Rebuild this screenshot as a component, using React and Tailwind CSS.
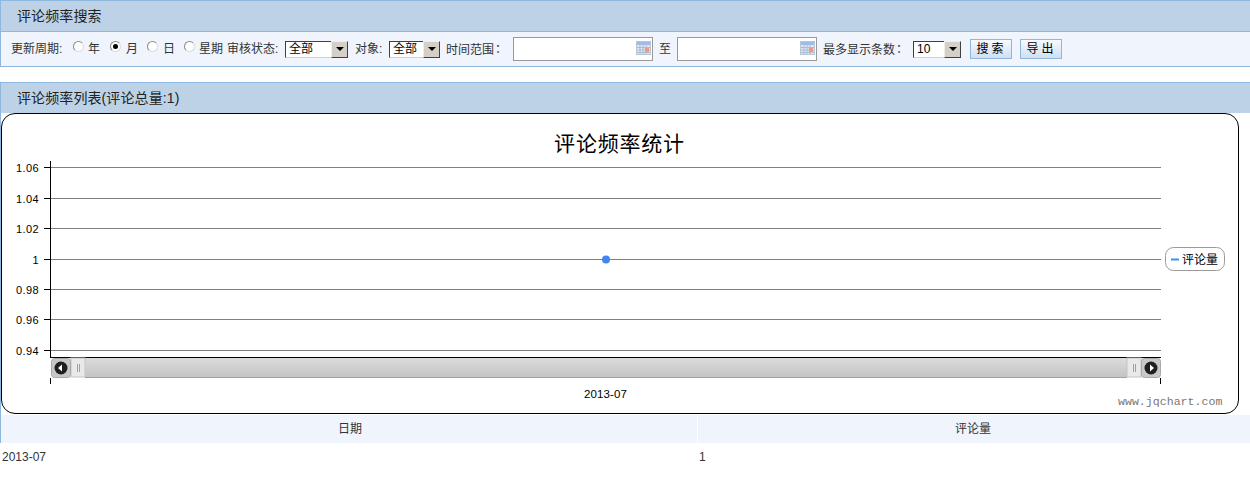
import React from 'react';

const yTicks = [
  { label: '1.06', y: 167 },
  { label: '1.04', y: 198 },
  { label: '1.02', y: 228 },
  { label: '1', y: 259 },
  { label: '0.98', y: 289 },
  { label: '0.96', y: 319 },
  { label: '0.94', y: 350 },
];

function Radio({ checked = false, className = '' }) {
  return (
    <span className={`flex h-[11px] w-[11px] shrink-0 -mt-[5px] items-center justify-center rounded-full border border-[#8a8a8a] border-r-[#dcdcdc] border-b-[#dcdcdc] bg-white ${className}`}>
      {checked && <span className="h-[5px] w-[5px] rounded-full bg-black"></span>}
    </span>
  );
}

function Label({ children, className = '' }) {
  return <span className={`shrink-0 whitespace-nowrap text-[12px] leading-none text-[#333] ${className}`}>{children}</span>;
}

// full width colon sits in the middle of its cell in the reference
function Colon() {
  return <span className="-ml-[2px] font-['Noto_Sans_CJK_TC',sans-serif]">：</span>;
}

function FakeSelect({ value, className = '' }) {
  return (
    <div className={`relative h-[17px] shrink-0 border border-[#404040] border-r-[#d4d0c8] border-b-[#d4d0c8] bg-white ${className}`}>
      <span className="block pl-[3px] text-[12px] leading-[15px] text-black">{value}</span>
      {/* arrow button */}
      <span className="absolute -right-px -top-px flex h-[17px] w-[17px] items-center justify-center border border-[#eeeeee] border-r-[#404040] border-b-[#404040] bg-[#d4d0c8]">
        <span className="h-0 w-0 border-x-[4px] border-t-[4px] border-x-transparent border-t-black"></span>
      </span>
    </div>
  );
}

function CalendarIcon() {
  return (
    <svg className="absolute right-[2px] top-[4px]" width="15" height="14" viewBox="0 0 15 14">
      <rect x="0.5" y="0.5" width="14" height="13" fill="#dfe7f3" stroke="#b9c4d4" />
      <rect x="1" y="1" width="13" height="3" fill="#9fbbe6" />
      <path d="M1 6.5H14M1 9H14M1 11.5H14M4 4V13M7 4V13M10 4V13" stroke="#aebbd0" strokeWidth="1" />
      <rect x="9" y="7" width="4" height="4" fill="#ee9a7e" />
    </svg>
  );
}

function DateInput({ className = '' }) {
  return (
    <div className={`relative h-[24px] w-[140px] shrink-0 ${className}`}>
      <input type="text" className="h-full w-full border border-[#999] bg-white outline-none" />
      <CalendarIcon />
    </div>
  );
}

function SearchButton({ children, className = '' }) {
  return (
    <button className={`h-[20px] w-[42px] shrink-0 border border-[#8fb8de] bg-gradient-to-b from-[#f7fafe] to-[#cfe0f3] pl-px text-[12px] leading-none tracking-[3px] text-black ${className}`}>
      {children}
    </button>
  );
}

function PanelHeader({ children }) {
  return (
    <div className="flex h-[30px] items-center bg-[#bdd2e7] pl-[16px] text-[14px] tracking-[0.1px] text-[#222]">
      {children}
    </div>
  );
}

function ScrollButton({ x, dir }) {
  const cx = x + 10;
  return (
    <g>
      <rect x={x + 0.5} y="358.5" width="19" height="19" rx="3" fill="#c8c8c8" stroke="#a8a8a8" />
      <circle cx={cx} cy="368" r="6.5" fill="#1f1f1f" />
      <path d={dir === 'left' ? `M${cx - 3} 368L${cx + 1} 364.5V371.5Z` : `M${cx + 3} 368L${cx - 1} 364.5V371.5Z`} fill="#fff" />
    </g>
  );
}

function Grip({ x }) {
  return (
    <g>
      <rect x={x} y="358" width="14" height="19" fill="#e9e9e9" stroke="#c4c4c4" />
      <path d={`M${x + 6.5} 364V372M${x + 8.5} 364V372`} stroke="#a0a0a0" />
    </g>
  );
}

function Chart() {
  return (
    <svg className="block h-full w-full" viewBox="2 114 1236 299">
      <defs>
        <linearGradient id="track" x1="0" y1="0" x2="0" y2="1">
          <stop offset="0" stopColor="#dcdcdc" />
          <stop offset="1" stopColor="#c4c4c4" />
        </linearGradient>
      </defs>

      <text x="619.5" y="151" textAnchor="middle" fontSize="21" letterSpacing="0.8" fill="#000" fontFamily="'Noto Sans CJK SC', sans-serif">评论频率统计</text>

      {yTicks.map((t) => (
        <g key={t.label}>
          <line x1="51" y1={t.y + 0.5} x2="1161" y2={t.y + 0.5} stroke="#808080" />
          <line x1="44" y1={t.y + 0.5} x2="50" y2={t.y + 0.5} stroke="#000" />
          <text x="39" y={t.y + 5} textAnchor="end" fontSize="11" letterSpacing="0.4" fill="#000" fontFamily="'Liberation Sans', sans-serif">{t.label}</text>
        </g>
      ))}

      <line x1="50.5" y1="161" x2="50.5" y2="358" stroke="#000" />
      <line x1="50" y1="357.5" x2="1161" y2="357.5" stroke="#000" />

      <rect x="85" y="358" width="1042" height="19" fill="url(#track)" />
      <line x1="85" y1="377.5" x2="1127" y2="377.5" stroke="#a0a0a0" />
      <Grip x={71} />
      <Grip x={1127} />
      <ScrollButton x={51} dir="left" />
      <ScrollButton x={1141} dir="right" />

      <line x1="50.5" y1="378" x2="50.5" y2="384" stroke="#000" />
      <line x1="1160.5" y1="378" x2="1160.5" y2="384" stroke="#000" />
      <text x="605.5" y="398" textAnchor="middle" fontSize="11.5" letterSpacing="0.1" fill="#000" fontFamily="'Liberation Sans', sans-serif">2013-07</text>

      <circle cx="606" cy="259.5" r="4" fill="#4285f0" />

      <rect x="1165.5" y="247.5" width="59" height="23" rx="8" fill="#fff" stroke="#9a9a9a" />
      <line x1="1171" y1="259.5" x2="1179" y2="259.5" stroke="#3d90f5" strokeWidth="2" />
      <text x="1182" y="264" fontSize="12" fill="#000" fontFamily="'Noto Sans CJK SC', sans-serif">评论量</text>

      <text x="1118" y="405" fontSize="11.6" fill="#777" fontFamily="'Liberation Mono', monospace">www.jqchart.com</text>
    </svg>
  );
}

export default function App() {
  return (
    <div className="h-[477px] w-[1250px] overflow-hidden bg-white font-['Liberation_Sans','Noto_Sans_CJK_SC',sans-serif] text-[#333]">
      {/* Search panel */}
      <div className="border-y border-l border-[#8fb8de]">
        <PanelHeader>评论频率搜索</PanelHeader>
        <div className="flex h-[35px] items-center border-t border-[#8fb8de] bg-[#eff4fd] pl-[10px]">
          <Label className="w-[50px]">更新周期:</Label>
          <Radio className="ml-[12px]" />
          <Label className="ml-[4px] w-[12px]">年</Label>
          <Radio checked className="ml-[10px]" />
          <Label className="ml-[5px] w-[12px]">月</Label>
          <Radio className="ml-[9px]" />
          <Label className="ml-[5px] w-[12px]">日</Label>
          <Radio className="ml-[9px]" />
          <Label className="ml-[4px] w-[24px]">星期</Label>
          <Label className="ml-[4px] w-[51px]">审核状态:</Label>
          <FakeSelect value="全部" className="ml-[7px] w-[63px]" />
          <Label className="ml-[7px] w-[27px]">对象:</Label>
          <FakeSelect value="全部" className="ml-[7px] w-[51px]" />
          <Label className="ml-[6px] w-[57px]">时间范围<Colon /></Label>
          <DateInput className="ml-[10px]" />
          <Label className="ml-[6px] w-[12px]">至</Label>
          <DateInput className="ml-[6px]" />
          <Label className="ml-[6px] w-[80px]">最多显示条数<Colon /></Label>
          <FakeSelect value="10" className="ml-[10px] w-[48px]" />
          <SearchButton className="ml-[9px]">搜索</SearchButton>
          <SearchButton className="ml-[8px]">导出</SearchButton>
        </div>
      </div>

      {/* List panel */}
      <div className="mt-[15px] border-t border-l border-[#8fb8de]">
        <PanelHeader>评论频率列表(评论总量:1)</PanelHeader>
        <div className="h-[301px] w-[1238px] rounded-[14px] border border-black bg-white">
          <Chart />
        </div>
        <div className="mt-px grid h-[28px] grid-cols-[696px_1fr] gap-px bg-white text-[12px] text-[#333]">
          <div className="flex items-center justify-center bg-[#eff4fd] pl-[2px]">日期</div>
          <div className="flex items-center justify-center bg-[#eff4fd] pr-[2px]">评论量</div>
        </div>
      </div>
      <div className="grid h-[28px] grid-cols-[697px_1fr] items-center text-[12px] text-[#333]">
        <div className="pl-[2px]">2013-07</div>
        <div className="pl-[2px]">1</div>
      </div>
    </div>
  );
}
